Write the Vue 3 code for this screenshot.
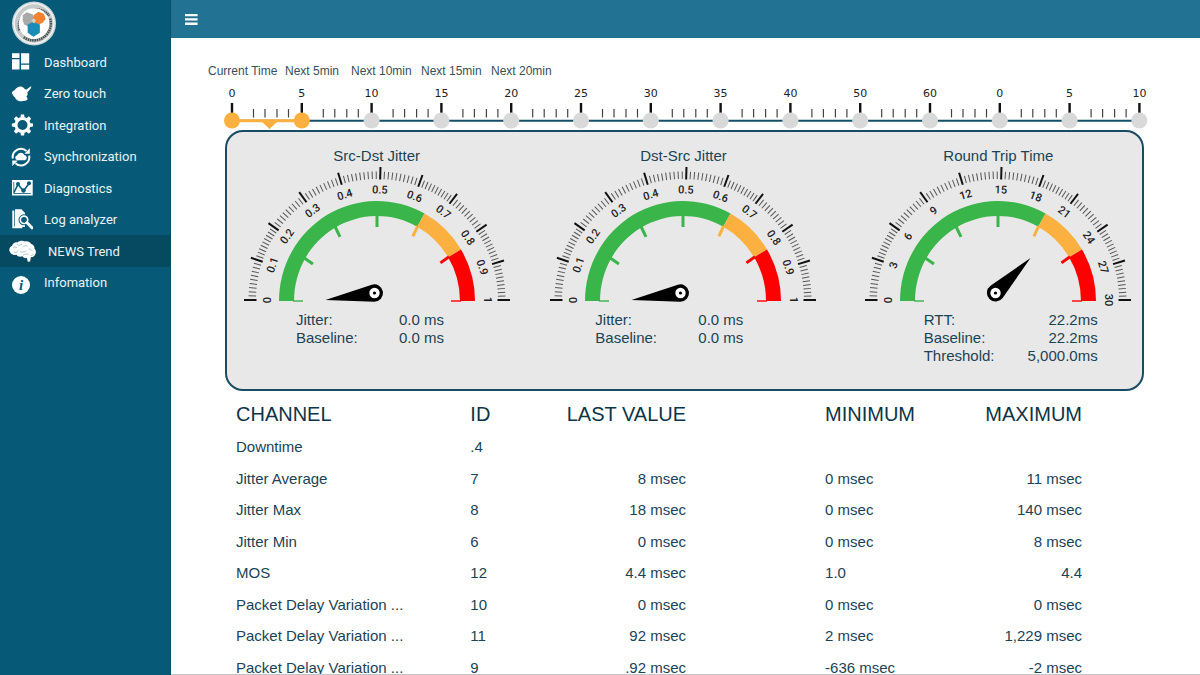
<script setup>
const navItems = [
  { label: 'Dashboard', icon: 'dashboard' },
  { label: 'Zero touch', icon: 'touch' },
  { label: 'Integration', icon: 'gear' },
  { label: 'Synchronization', icon: 'sync' },
  { label: 'Diagnostics', icon: 'diagnostics' },
  { label: 'Log analyzer', icon: 'log' },
  { label: 'NEWS Trend', icon: 'brain', active: true },
  { label: 'Infomation', icon: 'info' },
]

const periods = ['Current Time', 'Next 5min', 'Next 10min', 'Next 15min', 'Next 20min']

const STEP = 69.8
const stops = ['0', '5', '10', '15', '20', '25', '30', '35', '40', '50', '60', '0', '5', '10'].map(
  (label, i) => ({ label, x: 61 + i * STEP, on: i < 2 }),
)
const minorStops = []
for (let i = 0; i < stops.length - 1; i++) {
  for (const d of [21.5, 33, 45, 56.5]) minorStops.push(stops[i].x + d)
}

// Dial geometry, drawn around (140, 134)
const CX = 140
const CY = 134
const majorAngles = [0, 18.5, 35.3, 54.2, 73, 91.5, 110, 127, 145.5, 162.7, 180]

const minorAngles = []
for (let i = 0; i < majorAngles.length - 1; i++) {
  const gap = (majorAngles[i + 1] - majorAngles[i]) / 10
  for (let k = 1; k < 10; k++) minorAngles.push(majorAngles[i] + gap * k)
}

function point(angle, rx, ry = rx) {
  const a = (angle * Math.PI) / 180
  return [CX - rx * Math.cos(a), CY + 1 - ry * Math.sin(a)]
}

function band(from, to) {
  const [x1, y1] = point(from, 98, 100)
  const [x2, y2] = point(to, 98, 100)
  const [x3, y3] = point(to, 83, 85)
  const [x4, y4] = point(from, 83, 85)
  return `M${x1} ${y1}A98 100 0 0 1 ${x2} ${y2}L${x3} ${y3}A83 85 0 0 0 ${x4} ${y4}Z`
}

const bands = [
  { d: band(0, 119), color: '#39b54a' },
  { d: band(119, 149), color: '#fbb040' },
  { d: band(149, 180), color: '#ff0000' },
]

const innerTicks = [
  [0, '#39b54a', 1.4], [30, '#39b54a', 3], [60, '#39b54a', 3], [90, '#39b54a', 3],
  [119, '#fbb040', 3], [149, '#ff0000', 3], [180, '#ff0000', 1.4],
].map(([angle, color, width]) => {
  const [x1, y1] = point(angle, 84, 86)
  const [x2, y2] = point(angle, 74, 74)
  return { x1, y1, x2, y2, color, width }
})

const jitterScale = ['0', '0.1', '0.2', '0.3', '0.4', '0.5', '0.6', '0.7', '0.8', '0.9', '1']
const gauges = [
  {
    title: 'Src-Dst Jitter', scale: jitterScale, needle: -8,
    rows: [['Jitter:', '0.0 ms'], ['Baseline:', '0.0 ms']],
  },
  {
    title: 'Dst-Src Jitter', scale: jitterScale, needle: -8,
    rows: [['Jitter:', '0.0 ms'], ['Baseline:', '0.0 ms']],
  },
  {
    title: 'Round Trip Time', wide: true, needle: 135,
    scale: ['0', '3', '6', '9', '12', '15', '18', '21', '24', '27', '30'],
    rows: [['RTT:', '22.2ms'], ['Baseline:', '22.2ms'], ['Threshold:', '5,000.0ms']],
  },
]

const channels = [
  ['Downtime', '.4', '', '', ''],
  ['Jitter Average', '7', '8 msec', '0 msec', '11 msec'],
  ['Jitter Max', '8', '18 msec', '0 msec', '140 msec'],
  ['Jitter Min', '6', '0 msec', '0 msec', '8 msec'],
  ['MOS', '12', '4.4 msec', '1.0', '4.4'],
  ['Packet Delay Variation ...', '10', '0 msec', '0 msec', '0 msec'],
  ['Packet Delay Variation ...', '11', '92 msec', '2 msec', '1,229 msec'],
  ['Packet Delay Variation ...', '9', '.92 msec', '-636 msec', '-2 msec'],
]
</script>

<template>
  <div class="app">
    <aside class="sidebar">
      <svg class="logo" viewBox="0 0 46 46" aria-hidden="true">
        <circle cx="23" cy="23" r="22.500" fill="#cfd6d9" />
        <circle cx="23" cy="23" r="21" fill="#f4f5f5" />
        <circle cx="23" cy="23" r="17.600" fill="none" stroke="#c6c9ca" stroke-width="4" />
        <path d="M8 30A17.400 17.400 0 0 1 38.500 15" fill="none" stroke="#4b5052" stroke-width="2.600" stroke-dasharray="1.300 .7" />
        <path d="M39.500 18A17.400 17.400 0 0 1 12 36.500" fill="none" stroke="#4b5052" stroke-width="2.600" stroke-dasharray="1.600 .7" />
        <circle cx="23" cy="23" r="15.500" fill="#fff" />
        <path d="M11.500 14.500l4-3 6 2 2 4-2 6-4 2.500-4.500-2-1.500-4z" fill="#a9a9a9" />
        <path d="M22.500 14.500l5-3.500 5.500 2 2 5.500-3.500 4-5 2-5-2z" fill="#f58233" />
        <path d="M16.500 24l5.500-2.500 7 2.500v8.500l-6.500 4-6-4z" fill="#198db5" />
        <path d="M20 20l3-2 2 2-2 3z" fill="#d8d2c4" />
      </svg>

      <nav class="nav" aria-label="Main">
        <a v-for="item in navItems" :key="item.label" href="#" class="nav-item"
          :class="{ active: item.active }" :aria-current="item.active ? 'page' : undefined">
          <svg v-if="item.icon === 'dashboard'" class="icon" viewBox="0 0 24 24" aria-hidden="true">
            <path d="M3 3.300h7.500v4.700H3zM3 9.300h7.500v10.200H3zM12 3.300h8.200v10.200H12zM12 14.800h8.200v4.700H12z" />
          </svg>
          <svg v-else-if="item.icon === 'touch'" class="icon" viewBox="0 0 24 24" aria-hidden="true">
            <path d="M3 11.500C2.700 10 4 8.700 5.600 8.300 7.500 5 11.500 3.600 14 5.200c1.500 1 1.800 2.900 3.600 2.200L21.500 4.600c1.600-.2 1 1.400-3.300 6 1 1.500.4 3-.8 3.800 1.500 1.600 1.600 3.400-.4 4.100-4 1.300-8 1-9.600-1-1.200-.8-.7-1.900-1.900-2.600-1.500-.8-1.300-2.300-2.500-3.400z" />
          </svg>
          <svg v-else-if="item.icon === 'gear'" class="icon" viewBox="0 0 24 24" aria-hidden="true">
            <circle cx="13.500" cy="12" r="6.500" fill="none" stroke="#fff" stroke-width="3" />
            <path v-for="n in 8" :key="n" d="M11.400 4.800l.5-3.400h3.200l.5 3.400z" :transform="`rotate(${n * 45} 13.500 12)`" />
          </svg>
          <svg v-else-if="item.icon === 'sync'" class="icon" viewBox="0 0 24 24" aria-hidden="true">
            <path d="M3.800 13.500A8.300 8.300 0 0 1 17.500 6M20.200 10.500A8.300 8.300 0 0 1 6.500 18.200" fill="none" stroke="#fff" stroke-width="2" />
            <path d="M20.800 3.200v5.500h-5.400zM3.300 21v-5.600h5.500z" />
            <path d="M8.500 15.300a2.600 2.600 0 0 1-.3-5.100 3.800 3.800 0 0 1 7.100-.2 2.700 2.700 0 0 1 .5 5.300z" />
          </svg>
          <svg v-else-if="item.icon === 'diagnostics'" class="icon" viewBox="0 0 24 24" aria-hidden="true">
            <path d="M3 4h20.700v15.500H3z" />
            <path d="M5 16.500l4-8 5.500 6.500 5.500-7.500" fill="none" stroke="#075a77" stroke-width="1.600" />
            <path d="M4.800 6v11.500M4.800 17.500h17" fill="none" stroke="#075a77" stroke-width=".8" />
            <g fill="#075a77">
              <circle cx="9" cy="8" r="2" /><circle cx="14.500" cy="14.500" r="2.200" /><circle cx="20" cy="7.300" r="2" />
            </g>
          </svg>
          <svg v-else-if="item.icon === 'log'" class="icon" viewBox="0 0 24 24" aria-hidden="true">
            <path d="M3.300 2.500h2v16h8v1.800h-10z" />
            <path d="M6 1.300h6.500l3.500 3.800v14H6z" />
            <circle cx="15" cy="11.800" r="4" fill="#075a77" stroke="#075a77" stroke-width="3" />
            <circle cx="15" cy="11.800" r="3.700" fill="#075a77" stroke="#fff" stroke-width="1.700" />
            <path d="M18 14.800l5 5" stroke="#fff" stroke-width="3" stroke-linecap="round" />
          </svg>
          <svg v-else-if="item.icon === 'brain'" class="icon wide" viewBox="0 0 28 24" aria-hidden="true">
            <path d="M.5 12C-.2 9.500 1.200 7.500 3 7c.5-2.500 3-4 5.500-3.600C10.500 1.600 14 1.400 16 2.600c2.500-.8 5 .3 6 2.200 2.300.6 3.800 2.800 3.500 4.900 1.700 1.700 1.900 4.200.4 6-.4 1.700-2.200 2.600-4 2.400l-.8 4.400-2.300.2-.9-3.700c-2 .5-3.700-.3-4.500-1.700-2.300.9-4.900.3-6-1.500-3 .5-5.900-.8-6.900-3.800z" />
            <path d="M4 8.500c1.500-1 3-.5 4 .5M8 5.500c1.500 1 3.500 1 5-.3M13.500 8c1.200-1.500 3.500-1.700 5-.7M4.500 13c2 .8 4 .2 5-1.200M11 12.500c2 1.200 4.500.6 6-.8M19.500 10c1.800-.3 3.200.7 3.800 2M14 16.500c1.500-1.700 3.700-1.800 5.500-.9M21.500 16.500c1.300 0 2.500-.7 3-1.500" fill="none" stroke="#9db6bf" stroke-width=".8" />
          </svg>
          <svg v-else class="icon" viewBox="0 0 24 24" aria-hidden="true">
            <circle cx="12" cy="14" r="9" />
            <text class="info-mark" x="12" y="19" text-anchor="middle">i</text>
          </svg>
          <span>{{ item.label }}</span>
        </a>
      </nav>
    </aside>

    <div class="page">
      <header class="topbar">
        <button type="button" class="menu" aria-label="Toggle menu">
          <svg viewBox="0 0 13 11" aria-hidden="true"><path d="M0 0h12.600v2.300H0zM0 4.300h12.600v2.300H0zM0 8.600h12.600v2.300H0z" /></svg>
        </button>
      </header>

      <main class="content">
        <div class="periods">
          <span v-for="p in periods" :key="p">{{ p }}</span>
        </div>

        <svg class="timeline" viewBox="0 0 1029 44" role="img" aria-label="Time scale in minutes">
          <path d="M61 34.700H968" stroke="#14506a" stroke-width="2" />
          <path d="M61 34.700H131" stroke="#fbb040" stroke-width="3" />
          <path d="M90 35h17l-8.500 8z" fill="#fbb040" />
          <path v-for="x in minorStops" :key="x" :d="`M${x} 23v8.500`" stroke="#444" stroke-width="1.200" />
          <g v-for="(s, i) in stops" :key="i">
            <path :d="`M${s.x} 17v11`" stroke="#111" stroke-width="2.400" />
            <circle :cx="s.x" cy="34.500" r="8" :fill="s.on ? '#fbb040' : '#d9d9d9'" />
            <text class="stop-label" :x="s.x" y="11" text-anchor="middle">{{ s.label }}</text>
          </g>
        </svg>

        <section class="panel">
          <article v-for="g in gauges" :key="g.title" class="gauge" :class="{ rtt: g.wide }">
            <h2>{{ g.title }}</h2>
            <svg class="dial" viewBox="0 0 280 144" role="img" :aria-label="g.title">
              <path v-for="a in minorAngles" :key="a" :d="`M${CX - 128.500} ${CY}h7.500`"
                :transform="`rotate(${a} ${CX} ${CY})`" stroke="#555" stroke-width="1" />
              <path v-for="a in majorAngles" :key="'m' + a" :d="`M${CX - 133} ${CY}h12.500`"
                :transform="`rotate(${a} ${CX} ${CY})`" stroke="#111" stroke-width="2" />
              <text v-for="(n, i) in g.scale" :key="n" class="dial-label" :x="CX" :y="CY - 106.500" text-anchor="middle"
                :transform="`rotate(${majorAngles[i] - 90} ${CX} ${CY})`">{{ n }}</text>
              <path v-for="b in bands" :key="b.color" :d="b.d" :fill="b.color" />
              <path v-for="(t, i) in innerTicks" :key="'t' + i" :d="`M${t.x1} ${t.y1}L${t.x2} ${t.y2}`"
                :stroke="t.color" :stroke-width="t.width" />
              <path d="M-49.500 0L-1.500-8.600A8.700 8.700 0 1 1-1.500 8.600z" :transform="`translate(137.500 127) rotate(${g.needle})`" />
              <circle cx="137.500" cy="127" r="5.200" fill="#fff" />
              <circle cx="137.500" cy="127" r="1.600" />
            </svg>
            <dl class="readout">
              <div v-for="[k, v] in g.rows" :key="k"><dt>{{ k }}</dt><dd>{{ v }}</dd></div>
            </dl>
          </article>
        </section>

        <table class="channels">
          <colgroup><col class="c1"><col class="c2"><col class="c3"><col class="c4"><col class="c5"></colgroup>
          <thead>
            <tr>
              <th scope="col">CHANNEL</th>
              <th scope="col">ID</th>
              <th scope="col" class="num">LAST VALUE</th>
              <th scope="col" class="min">MINIMUM</th>
              <th scope="col" class="num">MAXIMUM</th>
            </tr>
          </thead>
          <tbody>
            <tr v-for="row in channels" :key="row[1]">
              <td>{{ row[0] }}</td>
              <td>{{ row[1] }}</td>
              <td class="num">{{ row[2] }}</td>
              <td class="min">{{ row[3] }}</td>
              <td class="num">{{ row[4] }}</td>
            </tr>
          </tbody>
        </table>
      </main>
    </div>
  </div>
</template>

<style>
body {
  margin: 0;
  background: #fff;
}
</style>

<style scoped>
* {
  box-sizing: border-box;
}

.app {
  display: flex;
  height: 100vh;
  overflow: hidden;
  font-family: "Liberation Sans", Arial, sans-serif;
  color: #1b4356;
}

.sidebar {
  flex: 0 0 171px;
  background: #075a77;
  border-right: 1px solid #0b4d66;
}

.logo {
  display: block;
  width: 46px;
  height: 46px;
  margin-left: 11px;
  padding-top: 1px;
}

.nav {
  display: flex;
  flex-direction: column;
}

.nav-item {
  display: flex;
  align-items: center;
  gap: 11px;
  height: 32px;
  padding-left: 9px;
  color: #e9f3f6;
  font-family: Roboto, "Liberation Sans", sans-serif;
  font-size: 13px;
  text-decoration: none;
}

.nav-item:nth-child(even) {
  height: 31px;
}

.nav-item.active {
  background: #064a61;
}

.icon {
  flex: none;
  width: 24px;
  height: 24px;
  fill: #fff;
}

.icon.wide {
  width: 28px;
}

.info-mark {
  font: italic bold 15px "Liberation Serif", serif;
  fill: #075a77;
}

.page {
  flex: 1;
  min-width: 0;
  display: flex;
  flex-direction: column;
  border-bottom: 1px solid #c4c4c4;
}

.topbar {
  flex: 0 0 38px;
  display: flex;
  align-items: center;
  padding-left: 14px;
  background: #217293;
}

.menu {
  display: flex;
  padding: 0;
  border: 0;
  background: none;
}

.menu svg {
  width: 13px;
  height: 11px;
  fill: #fff;
}

.content {
  flex: 1;
  min-height: 0;
  overflow: hidden;
  padding-top: 25px;
}

.periods {
  display: grid;
  grid-template-columns: 77px 66px 70px 70px auto;
  margin-left: 37px;
  font-size: 12px;
  line-height: 16px;
  color: #36505c;
}

.timeline {
  display: block;
  width: 100%;
  margin-top: 7px;
}

.stop-label {
  font: 11px "DejaVu Sans", sans-serif;
  fill: #222;
}

.panel {
  display: grid;
  grid-template-columns: 299fr 314fr 301fr;
  min-height: 261px;
  margin: 0 56px 0 54px;
  border: 2px solid #174c62;
  border-radius: 18px;
  background: #e8e8e8;
}

.gauge {
  display: flex;
  flex-direction: column;
  align-items: center;
  padding-top: 14px;
}

.gauge.rtt {
  padding-left: 14px;
}

.gauge h2 {
  margin: 0;
  font-size: 15px;
  font-weight: 400;
  line-height: 20px;
}

.dial {
  width: 280px;
  height: 144px;
}

.dial-label {
  font: 500 11px Roboto, "Liberation Sans", sans-serif;
  fill: #222;
}

.readout {
  align-self: flex-start;
  width: 148px;
  margin: 1px 0 0 69px;
  font-size: 15px;
  line-height: 18px;
}

.rtt .readout {
  width: 174px;
}

.readout div {
  display: flex;
  justify-content: space-between;
}

.readout dd {
  margin: 0;
}

.channels {
  width: calc(100% - 183px);
  margin: 6px 0 0 65px;
  border-collapse: collapse;
  table-layout: fixed;
  font-size: 15px;
}

.c1 { width: 27.7%; }
.c2 { width: 10%; }
.c3 { width: 15.5%; }
.c4 { width: 27.8%; }
.c5 { width: 19%; }

th,
td {
  padding: 0;
  text-align: left;
  white-space: nowrap;
}

th {
  height: 34px;
  font-size: 20px;
  font-weight: 400;
  color: #0d3447;
}

td {
  height: 31px;
}

tr:nth-child(even) td {
  height: 32px;
}

th.num,
td.num {
  text-align: right;
}

th.min,
td.min {
  padding-left: 139px;
}
</style>
